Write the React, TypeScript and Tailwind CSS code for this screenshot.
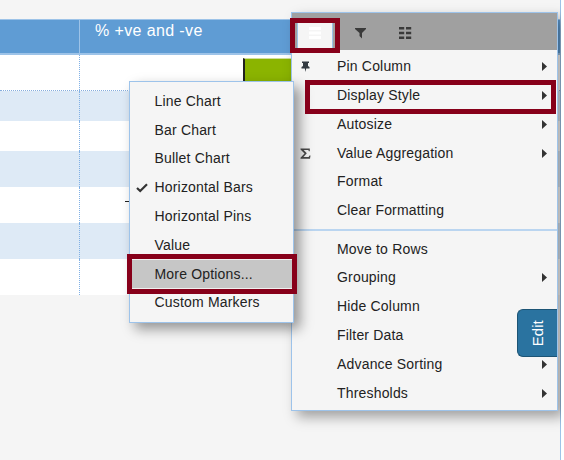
import React from "react";

type Item = { label: string; arrow?: boolean; icon?: "pin" | "sigma" | "check"; selected?: boolean };

const topItems: Item[] = [
  { label: "Pin Column", arrow: true, icon: "pin" },
  { label: "Display Style", arrow: true },
  { label: "Autosize", arrow: true },
  { label: "Value Aggregation", arrow: true, icon: "sigma" },
  { label: "Format" },
  { label: "Clear Formatting" },
];

const bottomItems: Item[] = [
  { label: "Move to Rows" },
  { label: "Grouping", arrow: true },
  { label: "Hide Column" },
  { label: "Filter Data" },
  { label: "Advance Sorting", arrow: true },
  { label: "Thresholds", arrow: true },
];

const styleItems: Item[] = [
  { label: "Line Chart" },
  { label: "Bar Chart" },
  { label: "Bullet Chart" },
  { label: "Horizontal Bars", icon: "check" },
  { label: "Horizontal Pins" },
  { label: "Value" },
  { label: "More Options...", selected: true },
  { label: "Custom Markers" },
];

const rows = [
  "h-[36px] bg-white",
  "h-[30px] bg-[#deeaf6]",
  "h-[30px] bg-white",
  "h-[36px] bg-[#deeaf6]",
  "h-[36px] bg-white",
  "h-[36px] bg-[#deeaf6]",
  "h-[36px] bg-white",
];

function Icon({ name }: { name?: Item["icon"] }) {
  if (name === "pin")
    return (
      <svg className="ml-px" width="9" height="11" viewBox="0 0 9 11" fill="#333b42">
        <path d="M1 0.5h7v1.5h-1v3l1.5 1v1.5H5.2L4.5 11 3.8 7.5H0.5V6L2 5V2H1z" />
      </svg>
    );
  if (name === "sigma")
    return (
      <svg className="mt-px" width="11" height="11" viewBox="0 0 11 11" fill="#4a4a4a">
        <path d="M.5.5h9.3v2.7h-.9L8.3 2H3.6l3.2 3.3L3.4 9h5.2l.9-1.6h1L10 10.7H.5v-.9l4-4.2L.5 1.5z" />
      </svg>
    );
  if (name === "check")
    return (
      <svg width="12" height="10" viewBox="0 0 12 10" fill="none" stroke="#333" strokeWidth="2.2">
        <path d="M1 5l3.2 3L11 1.3" />
      </svg>
    );
  return null;
}

function MenuRow({ item }: { item: Item }) {
  return (
    <div className="flex h-[28.8px] items-center pr-[10px]">
      <span className="flex w-[45px] pl-[8px]">
        <Icon name={item.icon} />
      </span>
      <span className="flex-1 whitespace-nowrap">{item.label}</span>
      {item.arrow && (
        <svg width="5" height="9" viewBox="0 0 5 9" fill="#333">
          <path d="M0 0l5 4.5L0 9z" />
        </svg>
      )}
    </div>
  );
}

export default function App() {
  return (
    <div className="relative h-[460px] w-[561px] overflow-hidden bg-[#f5f5f5] font-['Liberation_Sans',Arial,sans-serif] text-[14px] tracking-[0.18px] text-[#222]">
      <div className="h-full border-r border-[#9dc3e8] pt-[19px]">
        <div className="flex h-[36px] border-t border-b-2 border-t-[#9dc3e8] border-b-[#9dc3e8] bg-[#5f9cd4] text-[16px] tracking-[0.38px] text-white">
          <div className="w-[80px] border-r border-[#9dc3e8]" />
          <div className="pl-[15px] leading-[22px]">% +ve and -ve</div>
        </div>
        {rows.map((r, i) => (
          <div key={i} className={`flex ${r} ${i === 0 ? "border-b border-dotted border-b-[#86aede]" : ""}`}>
            <div className="w-[80px] border-r border-dotted border-r-[#7fb0e6]" />
            {i === 0 && <div className="ml-[163px] mt-[3px] w-[60px] border-t border-l-2 border-t-[#d0df9b] border-l-[#222] bg-[#8bb400]" />}
            {i === 4 && <div className="ml-[45px] mt-[14px] h-px w-[8px] bg-[#222]" />}
          </div>
        ))}
      </div>

      <div className="absolute left-[291px] top-[12px] h-[399px] w-[267px] border border-[#9dc3ea] bg-[#f5f5f5] shadow-[6px_6px_12px_rgba(0,0,0,0.35)]">
        <div className="flex h-[37px] items-center bg-[#a0a0a0]">
          <div className="mt-[9px] ml-[5px] flex h-[28px] w-[36px] justify-center self-start border-x border-[#9dc3ea] bg-[#f5f5f5] pt-[5px]">
            <svg width="12" height="12" viewBox="0 0 12 12" fill="#fff">
              <path d="M0 0h12v3H0zM0 4.5h12v3H0zM0 9h12v3H0z" />
            </svg>
          </div>
          <svg className="mt-[3px] ml-[22px]" width="12" height="11" viewBox="0 0 12 11" fill="#3a3a3a">
            <path d="M0 0h11v1L7 5v5.5L4.5 8V5L0 1z" />
          </svg>
          <svg className="mt-[2px] ml-[32px]" width="13" height="12" viewBox="0 0 13 12" fill="#3a3a3a">
            <path d="M0 0h5.2v2.4H0zM7 0h5.2v2.4H7zM0 4.8h5.2v2.4H0zM7 4.8h5.2v2.4H7zM0 9.6h5.2V12H0zM7 9.6h5.2V12H7z" />
          </svg>
        </div>
        <div className="pt-[2.4px]">{topItems.map((i) => <MenuRow key={i.label} item={i} />)}</div>
        <div className="mt-[3.8px] mb-[3.8px] h-[2px] bg-[#bad5f0]" />
        {bottomItems.map((i) => <MenuRow key={i.label} item={i} />)}
      </div>

      <div className="absolute left-[129px] top-[81px] h-[242px] w-[165px] border border-[#9dc3ea] bg-[#f5f5f5] pt-[5px] shadow-[6px_6px_12px_rgba(0,0,0,0.4)]">
        {styleItems.map((i) => (
          <div key={i.label} className={`flex h-[28.8px] items-center pl-[6px] ${i.selected ? "bg-[#c6c6c6]" : ""}`}>
            <span className="w-[18.5px]">
              <Icon name={i.icon} />
            </span>
            <span className="whitespace-nowrap">{i.label}</span>
          </div>
        ))}
      </div>

      <div className="absolute left-[517px] top-[309px] flex h-[48px] w-[40px] items-center justify-center rounded-l-[6px] border border-r-0 border-[#1c5475] bg-[#2a73a0] text-[15px] tracking-normal text-white">
        <span className="-rotate-90">Edit</span>
      </div>

      <div className="absolute left-[290px] top-[18px] h-[35px] w-[50px] border-5 border-[#87001a]" />
      <div className="absolute left-[305px] top-[80px] h-[34px] w-[251px] border-5 border-[#87001a]" />
      <div className="absolute left-[127px] top-[254px] h-[40px] w-[170px] border-5 border-[#87001a]">
        <div className="h-full border-y border-[#f0f0f0]" />
      </div>
    </div>
  );
}
